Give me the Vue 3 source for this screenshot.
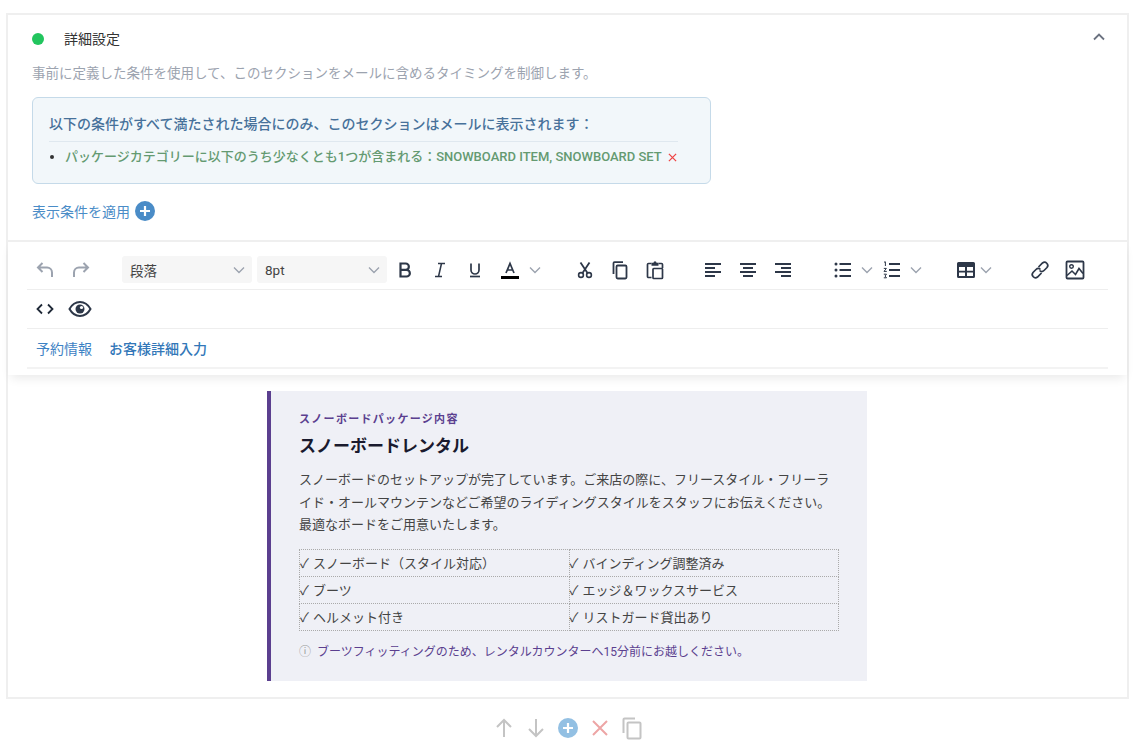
<template>
  <div class="page">
    <div class="card">
      <section class="settings">
        <div class="settings-head">
          <span class="dot"></span>
          <span class="settings-title">詳細設定</span>
          <svg class="collapse" width="14" height="14" viewBox="0 0 14 14"><path d="M2 9.500 7 4.500l5 5" fill="none" stroke="#6b7280" stroke-width="1.800"/></svg>
        </div>
        <p class="desc">事前に定義した条件を使用して、このセクションをメールに含めるタイミングを制御します。</p>
        <div class="cond">
          <div class="cond-title">以下の条件がすべて満たされた場合にのみ、このセクションはメールに表示されます：</div>
          <ul class="cond-list">
            <li>パッケージカテゴリーに以下のうち少なくとも1つが含まれる：SNOWBOARD ITEM, SNOWBOARD SET<svg class="cond-x" width="9" height="9" viewBox="0 0 10 10"><path d="M1 1l8 8M9 1l-8 8" stroke="#ef4444" stroke-width="1.400"/></svg></li>
          </ul>
        </div>
        <div class="apply">
          <span>表示条件を適用</span>
          <svg width="20" height="20" viewBox="0 0 20 20"><circle cx="10" cy="10" r="10" fill="#4a8cc7"/><path d="M10 5v10M5 10h10" stroke="#fff" stroke-width="2.200"/></svg>
        </div>
      </section>

      <div class="toolbar">
        <div class="row row-main">
          <button class="tb muted"><svg width="20" height="20" viewBox="0 0 20 20"><path d="M7.500 3 3 7.500 7.500 12M3 7.500h9a5 5 0 0 1 5 5V17" fill="none" stroke="#9ca3af" stroke-width="2"/></svg></button>
          <button class="tb muted gap1"><svg width="20" height="20" viewBox="0 0 20 20"><path d="M12.500 3 17 7.500 12.500 12M17 7.500H8a5 5 0 0 0-5 5V17" fill="none" stroke="#9ca3af" stroke-width="2"/></svg></button>
          <div class="select first"><span>段落</span><svg class="chev" width="12" height="8" viewBox="0 0 12 8"><path d="M1 1.500 6 6.500l5-5" fill="none" stroke="#9ca3af" stroke-width="1.400"/></svg></div>
          <div class="select"><span>8pt</span><svg class="chev" width="12" height="8" viewBox="0 0 12 8"><path d="M1 1.500 6 6.500l5-5" fill="none" stroke="#9ca3af" stroke-width="1.400"/></svg></div>

          <button class="tb"><svg width="20" height="20" viewBox="0 0 20 20"><path d="M5.500 3.500h5.200a3 3 0 0 1 0 6.300H5.500zM5.500 9.800h6a3.300 3.300 0 0 1 0 6.700h-6z" fill="none" stroke="#2d3748" stroke-width="2.200"/></svg></button>
          <button class="tb"><svg width="20" height="20" viewBox="0 0 20 20"><path d="M8 3.500h7M5 16.500h7M11.500 3.500l-3 13" fill="none" stroke="#2d3748" stroke-width="1.500"/></svg></button>
          <button class="tb"><svg width="20" height="20" viewBox="0 0 20 20"><path d="M6 3.500V10a4 4 0 0 0 8 0V3.500" fill="none" stroke="#2d3748" stroke-width="1.700"/><path d="M5 16.500h10" stroke="#2d3748" stroke-width="1.700"/></svg></button>
          <button class="tb"><svg width="20" height="20" viewBox="0 0 20 20"><path d="M6 13 10 3.500 14 13M7.300 10h5.400" fill="none" stroke="#2d3748" stroke-width="1.700"/><rect x="1" y="16" width="18" height="3" fill="#000"/></svg></button>
          <span class="caret c-a"><svg width="12" height="8" viewBox="0 0 12 8"><path d="M1 1.500 6 6.500l5-5" fill="none" stroke="#9ca3af" stroke-width="1.400"/></svg></span>

          <button class="tb sep-cut"><svg width="20" height="20" viewBox="0 0 20 20"><path d="M5.500 2.500 12.500 13M14.500 2.500 7.500 13" fill="none" stroke="#2d3748" stroke-width="1.800"/><circle cx="6" cy="15" r="2.400" fill="none" stroke="#2d3748" stroke-width="1.600"/><circle cx="14" cy="15" r="2.400" fill="none" stroke="#2d3748" stroke-width="1.600"/></svg></button>
          <button class="tb"><svg width="20" height="20" viewBox="0 0 20 20"><path d="M3.500 14V3.200a1 1 0 0 1 1-1h8.500" fill="none" stroke="#2d3748" stroke-width="1.800"/><rect x="6.500" y="5.500" width="10" height="13" rx="1.200" fill="none" stroke="#2d3748" stroke-width="1.800"/></svg></button>
          <button class="tb"><svg width="20" height="20" viewBox="0 0 20 20"><path d="M6.500 17.500H3.500a1 1 0 0 1-1-1V4.500a1 1 0 0 1 1-1h3M13.500 3.500h3a1 1 0 0 1 1 1V8" fill="none" stroke="#2d3748" stroke-width="1.700"/><path d="M6.500 2.700h2a1.500 1.500 0 0 1 3 0h2v3h-7z" fill="#2d3748"/><rect x="8" y="8.500" width="9.500" height="10" rx=".8" fill="none" stroke="#2d3748" stroke-width="1.700"/></svg></button>

          <button class="tb sep-align"><svg width="20" height="20" viewBox="0 0 20 20"><path d="M2 4h16M2 8h10M2 12h16M2 16h10" stroke="#2d3748" stroke-width="1.800"/></svg></button>
          <button class="tb"><svg width="20" height="20" viewBox="0 0 20 20"><path d="M2 4h16M5 8h10M2 12h16M5 16h10" stroke="#2d3748" stroke-width="1.800"/></svg></button>
          <button class="tb"><svg width="20" height="20" viewBox="0 0 20 20"><path d="M2 4h16M8 8h10M2 12h16M8 16h10" stroke="#2d3748" stroke-width="1.800"/></svg></button>

          <button class="tb sep-list"><svg width="20" height="20" viewBox="0 0 20 20"><path d="M6.500 4H18M6.500 10H18M6.500 16H18" stroke="#2d3748" stroke-width="1.800"/><circle cx="3" cy="4" r="1.500" fill="#2d3748"/><circle cx="3" cy="10" r="1.500" fill="#2d3748"/><circle cx="3" cy="16" r="1.500" fill="#2d3748"/></svg></button>
          <span class="caret c-l"><svg width="12" height="8" viewBox="0 0 12 8"><path d="M1 1.500 6 6.500l5-5" fill="none" stroke="#9ca3af" stroke-width="1.400"/></svg></span>
          <button class="tb"><svg width="20" height="20" viewBox="0 0 20 20"><path d="M7 4h11M7 10h11M7 16h11" stroke="#2d3748" stroke-width="1.800"/><path d="M2 2.200 3.400 1.800V6M1.800 8.400h2.600L2 11.400h2.800M1.800 14.200h2.700L3 16l1.500 1.800H1.800" fill="none" stroke="#2d3748" stroke-width="1"/></svg></button>
          <span class="caret c-l"><svg width="12" height="8" viewBox="0 0 12 8"><path d="M1 1.500 6 6.500l5-5" fill="none" stroke="#9ca3af" stroke-width="1.400"/></svg></span>

          <button class="tb tb-table"><svg width="20" height="20" viewBox="0 0 20 20"><path fill="#2d3748" fill-rule="evenodd" d="M2.500 2h15a1.500 1.500 0 0 1 1.500 1.500v13a1.500 1.500 0 0 1-1.500 1.500h-15A1.500 1.500 0 0 1 1 16.500v-13A1.500 1.500 0 0 1 2.500 2zM3 7v3.800h6V7zm8 0v3.800h6V7zm-8 5.500V16h6v-3.500zm8 0V16h6v-3.500z"/></svg></button>
          <span class="caret c-t"><svg width="12" height="8" viewBox="0 0 12 8"><path d="M1 1.500 6 6.500l5-5" fill="none" stroke="#9ca3af" stroke-width="1.400"/></svg></span>

          <button class="tb sep-link"><svg width="20" height="20" viewBox="0 0 20 20"><path d="M8.500 7 12.500 3a3.200 3.200 0 0 1 4.500 4.500l-3 3a3.200 3.200 0 0 1-4.500 0M11.500 13 7.500 17A3.200 3.200 0 0 1 3 12.500l3-3a3.200 3.200 0 0 1 4.500 0" fill="none" stroke="#2d3748" stroke-width="1.700"/></svg></button>
          <button class="tb"><svg width="20" height="20" viewBox="0 0 20 20"><rect x="1.500" y="1.500" width="17" height="17" rx="1" fill="none" stroke="#2d3748" stroke-width="1.800"/><circle cx="6.500" cy="6.500" r="1.800" fill="none" stroke="#2d3748" stroke-width="1.400"/><path d="M2 15.500 7 11l3.500 3.500L14 8.500l4 5" fill="none" stroke="#2d3748" stroke-width="1.600"/></svg></button>
        </div>
        <div class="row row-second">
          <button class="tb"><svg width="20" height="20" viewBox="0 0 20 20"><path d="M7 5.500 2.500 10 7 14.500M13 5.500l4.500 4.500-4.500 4.500" fill="none" stroke="#1f2937" stroke-width="1.800"/></svg></button>
          <button class="tb"><svg width="24" height="20" viewBox="0 0 24 20"><path d="M1.500 10C4 5.500 7.800 3 12 3s8 2.500 10.500 7c-2.500 4.500-6.300 7-10.500 7S4 14.500 1.500 10z" fill="none" stroke="#2d3748" stroke-width="2"/><circle cx="12" cy="10" r="4.500" fill="#2d3748"/><circle cx="13.500" cy="8.500" r="1.600" fill="#fff"/></svg></button>
        </div>
        <div class="row row-tags">
          <a class="tag">予約情報</a>
          <a class="tag strong">お客様詳細入力</a>
        </div>
      </div>

      <div class="content">
        <div class="package">
          <div class="pk-label">スノーボードパッケージ内容</div>
          <h2 class="pk-title">スノーボードレンタル</h2>
          <p class="pk-body">スノーボードのセットアップが完了しています。ご来店の際に、フリースタイル・フリーライド・オールマウンテンなどご希望のライディングスタイルをスタッフにお伝えください。最適なボードをご用意いたします。</p>
          <table class="pk-table">
            <tbody>
              <tr v-for="(row, i) in items" :key="i">
                <td v-for="item in row" :key="item"><span class="check">✓</span>{{ item }}</td>
              </tr>
            </tbody>
          </table>
          <p class="pk-note"><span class="info">ⓘ</span>ブーツフィッティングのため、レンタルカウンターへ15分前にお越しください。</p>
        </div>
      </div>
    </div>

    <div class="actions">
      <svg width="24" height="24" viewBox="0 0 24 24"><path d="M12 21V4M5 11l7-7 7 7" fill="none" stroke="#c4c4c4" stroke-width="2"/></svg>
      <svg width="24" height="24" viewBox="0 0 24 24"><path d="M12 3v17M5 13l7 7 7-7" fill="none" stroke="#c4c4c4" stroke-width="2"/></svg>
      <svg width="24" height="24" viewBox="0 0 24 24"><circle cx="12" cy="12" r="10" fill="#93c0e3"/><path d="M12 7v10M7 12h10" stroke="#fff" stroke-width="2.200"/></svg>
      <svg width="24" height="24" viewBox="0 0 24 24"><path d="M5 5l14 14M19 5 5 19" stroke="#eda5a5" stroke-width="2"/></svg>
      <svg width="24" height="24" viewBox="0 0 24 24"><path d="M3.500 17V3.500a1 1 0 0 1 1-1H15" fill="none" stroke="#c4c4c4" stroke-width="2"/><rect x="7.500" y="6.500" width="13" height="16" rx="1" fill="none" stroke="#c4c4c4" stroke-width="2"/></svg>
    </div>
  </div>
</template>

<script setup>
const items = [
  ['スノーボード（スタイル対応）', 'バインディング調整済み'],
  ['ブーツ', 'エッジ＆ワックスサービス'],
  ['ヘルメット付き', 'リストガード貸出あり'],
]
</script>

<style>
html, body { margin: 0; background: #fff; }
</style>

<style scoped>
.page { padding: 13px 8px 0 6px; font-family: Roboto, "Noto Sans CJK JP", sans-serif; color: #333; height: 748px; box-sizing: border-box; overflow: hidden; }
.card { border: 2px solid #efefef; height: 686px; box-sizing: border-box; }

.settings { padding: 0 24px; height: 225px; box-sizing: border-box; }
.settings-head { display: flex; align-items: center; height: 48px; }
.dot { width: 12px; height: 12px; border-radius: 50%; background: #22c55e; margin-right: 21px; }
.settings-title { font-size: 14px; color: #333; margin-top: -2px; margin-left: -1px; }
.collapse { margin-left: auto; margin-right: -3px; margin-top: -4px; }
.desc { margin: 0; font-size: 13.5px; line-height: 20px; color: #9ca3af; }
.cond { margin-top: 14px; width: 679px; box-sizing: border-box; height: 87px; border: 1px solid #c5dae9; border-radius: 6px; background: #f2f7fa; padding: 15px 32px 0 16px; }
.cond-title { font-size: 14px; font-weight: 500; color: #47719a; line-height: 22px; padding-bottom: 6px; border-bottom: 1px solid #dfe8ef; }
.cond-list { margin: 5px 0 0; padding: 0 0 0 16px; font-size: 13px; font-weight: 500; color: #649a71; line-height: 20px; }
.cond-list li::marker { color: #333; }
.cond-x { margin-left: 6px; vertical-align: -1px; }
.apply { display: flex; align-items: center; gap: 5px; margin-top: 17px; font-size: 14px; color: #4a8cc7; }

.toolbar { border-top: 2px solid #efefef; background: #fff; box-shadow: 0 6px 10px -3px rgba(0,0,0,.09); padding: 8px 19px 0 19px; height: 135px; box-sizing: border-box; position: relative; }
.row { display: flex; align-items: center; border-bottom: 1px solid #eee; }
.row-main { height: 39px; }
.row-second { height: 38px; }
.row-tags { height: 38px; border-bottom: 2px solid #f3f3f3; gap: 17px; padding-left: 9px; }
.tb { width: 35px; height: 30px; padding: 0; border: 0; background: none; display: flex; align-items: center; justify-content: center; flex: none; }
.gap1 { margin-left: 1px; }
.select { width: 130px; height: 27px; background: #f6f6f6; border-radius: 3px; margin-right: 5px; padding: 0 8px; box-sizing: border-box; display: flex; align-items: center; justify-content: space-between; font-size: 13.5px; color: #444; flex: none; }
.select .chev { margin-right: -1px; }
.select.first { margin-left: 24px; }
.select + .select { margin-right: 0; }
.caret { display: flex; align-items: center; flex: none; }
.c-a { margin-left: 2px; }
.c-l { margin-left: 1px; margin-right: 1px; }
.c-t { margin-left: -3px; }
.sep-cut { margin-left: 26px; }
.sep-align { margin-left: 23px; }
.sep-list { margin-left: 25px; }
.tb-table { margin-left: 25px; }
.sep-link { margin-left: 30px; }
.tag { font-size: 14px; color: #3d82c4; }
.tag.strong { font-weight: 500; color: #3277b8; }

.content { padding: 16px 1px 0 0; }
.package { width: 600px; height: 290px; box-sizing: border-box; margin: 0 auto; background: #eff0f6; border-left: 4px solid #5b3f8f; padding: 20px 28px 0; }
.pk-label { font-size: 11px; font-weight: 700; letter-spacing: 1.3px; color: #5b3f8f; line-height: 18px; }
.pk-title { margin: 5px 0 0; font-size: 17px; font-weight: 700; color: #1a1a2e; line-height: 24px; }
.pk-body { margin: 11px 0 0; font-size: 13px; line-height: 22.5px; color: #444; }
.pk-table { border-collapse: collapse; width: 540px; margin-top: 12px; table-layout: fixed; }
.pk-table td { border: 1px dotted #aaa; height: 26px; padding: 0; font-size: 13px; color: #444; }
.check { margin-right: 4px; }
.pk-note { margin: 11px 0 0; font-size: 12px; color: #5b3f8f; line-height: 20px; }
.info { color: #999; margin-right: 6px; }

.actions { display: flex; justify-content: center; gap: 8px; margin-top: 17px; }
</style>
